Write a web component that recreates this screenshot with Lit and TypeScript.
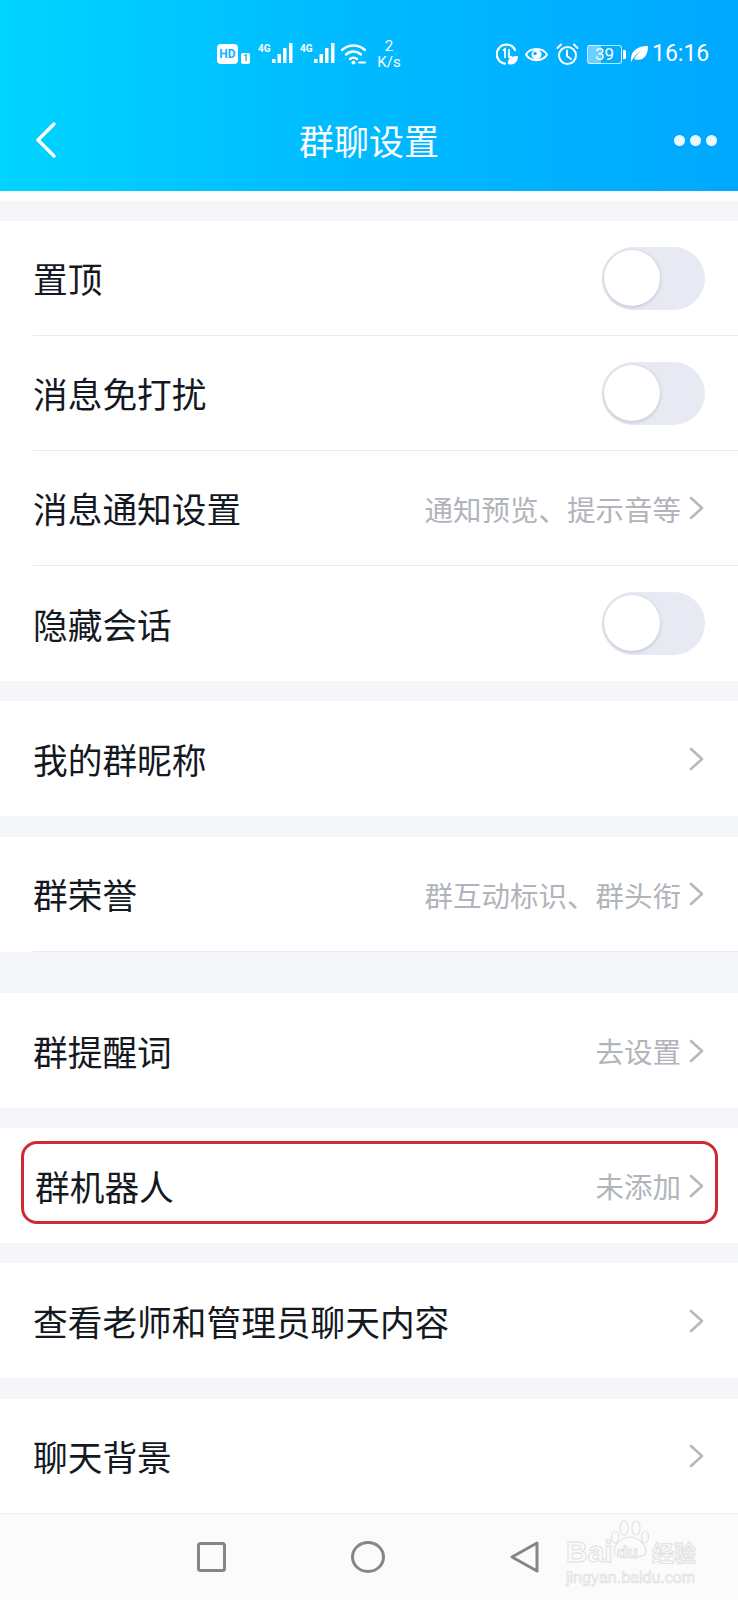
import { LitElement, html, css, svg } from "lit";
import { customElement } from "lit/decorators.js";

const chevron = html`<svg class="chev" viewBox="0 0 15 24"><path d="M2 2l11 10L2 22" fill="none" stroke="currentColor" stroke-width="2.6" stroke-linecap="round" stroke-linejoin="round"/></svg>`;

const signal = html`<svg class="sig" viewBox="0 0 35 22"><text x="0" y="9" font-family="Roboto" font-size="10" font-weight="700" fill="#fff">4G</text>
${svg`<rect x="14" y="16" width="3.500" height="4" fill="#fff"/><rect x="19.500" y="11" width="3.500" height="9" fill="#fff"/><rect x="25" y="5" width="3.500" height="15" fill="#fff"/><rect x="31" y="0" width="3.500" height="20" fill="#fff"/>`}</svg>`;

@customElement("app-root")
export class AppRoot extends LitElement {
  static styles = css`
    :host { display: block; width: 738px; height: 1600px; overflow: hidden; background: #f5f6fa; font-family: "Noto Sans CJK SC", "Noto Sans", sans-serif; }
    .head { height: 191px; background: linear-gradient(90deg, #00d4ff 0%, #00bbff 45%, #00a8ff 100%); color: #fff; display: flex; flex-direction: column; box-sizing: border-box; }
    .status { height: 42px; margin-top: 33px; padding-left: 217px; display: flex; align-items: center; gap: 0; }
    .hd { width: 21px; height: 20px; background: #fff; border-radius: 4px; color: #10b4ff; font: 700 12px/20px Roboto, sans-serif; text-align: center; }
    .one { width: 9px; height: 11px; margin: 8px 0 0 3px; background: #fff; border-radius: 2px; color: #10b4ff; font: 700 9px/11px Roboto, sans-serif; text-align: center; }
    .sig { width: 35px; height: 22px; margin-left: 8px; }
    .sig + .sig { margin-left: 7px; }
    .wifi { width: 27px; height: 22px; margin-left: 5px; }
    .speed { width: 26px; margin-left: 9px; text-align: center; font: 400 15px/16px Roboto, sans-serif; }
    .i { width: 23px; height: 23px; display: block; }
    .i1 { margin-left: 94px; }
    .i2 { margin-left: 6px; }
    .i3 { margin-left: 8px; }
    .batt { width: 35px; height: 19px; margin-left: 8px; box-sizing: border-box; border: 1.5px solid rgba(255,255,255,.75); border-radius: 3px; font: 400 17px/16px Roboto, sans-serif; text-align: center; background: linear-gradient(90deg, rgba(255,255,255,.42) 39%, transparent 39%); }
    .tip { width: 3px; height: 9px; margin-left: 1px; background: #fff; border-radius: 0 1px 1px 0; }
    .leaf { width: 18px; height: 18px; margin-left: 4px; }
    .time { margin-left: 4px; font: 400 23px/28px Roboto, sans-serif; }
    .bar { flex: 1; display: flex; align-items: center; justify-content: space-between; padding: 0 21px 0 35px; margin-top: 14px; position: relative; }
    .back { width: 22px; height: 38px; }
    .title { font-size: 35px; line-height: 42px; position: absolute; left: 0; right: 0; text-align: center; }
    .dots { display: flex; gap: 5px; }
    .dots i { width: 11px; height: 11px; border-radius: 50%; background: #eaf8ff; }
    .stripe { height: 10px; background: #fdfdfe; }
    .list { padding-top: 20px; }
    .sec { background: #fff; margin-bottom: 20px; }
    .sec.g21 { margin-bottom: 21px; }
    .sec.wide { margin-bottom: 41px; }
    .row { margin-left: 33px; padding-right: 34px; height: 115px; box-sizing: border-box; display: flex; align-items: center; border-bottom: 1px solid #e9eaed; position: relative; color: #14181f; font-size: 34.7px; }
    .row.end { border-bottom: none; }
    .row .lab { flex: 1; }
    .row .val { color: #b1b4bb; font-size: 28.5px; margin-right: 8px; }
    .chev { width: 15px; height: 24px; color: #b5b8be; }
    .sw { width: 103px; height: 63px; border-radius: 32px; background: #e8eaf3; margin-right: -1px; position: relative; }
    .sw i { position: absolute; left: 2px; top: 3px; width: 56px; height: 56px; border-radius: 50%; background: #fff; box-shadow: 0 1px 3px 1px rgba(120,125,150,.25); }
    .row.hl { padding-left: 2px; }
    .mark { position: absolute; left: -12px; top: 13px; width: 697px; height: 83px; box-sizing: border-box; border: 3px solid #cc2a36; border-radius: 16px; }
    .nav { height: 87px; margin-top: -21px; background: #fbfbfb; border-top: 1px solid #ececec; box-sizing: border-box; display: flex; align-items: center; padding-left: 197px; gap: 125px; position: relative; }
    .nav svg { display: block; }
    .wm { position: absolute; left: 566px; top: 6px; width: 132px; height: 64px; color: #fff; }
    .wm svg { position: absolute; left: 44px; top: 0; margin: 0; }
    .wm b { position: absolute; font: 700 30px/30px "Liberation Sans", sans-serif; top: 17px; color: #fbfbfb; -webkit-text-stroke: 1px #e0e0e0; }
    .wm .du { left: 51px; top: 24px; font-size: 17px; line-height: 17px; }
    .wm .cn { left: 86px; top: 18px; font: 700 22px/26px "Noto Sans CJK SC", sans-serif; }
    .wm span { position: absolute; left: 0; top: 49px; font: 400 16px/18px "Liberation Sans", sans-serif; color: #fbfbfb; -webkit-text-stroke: .7px #dedede; white-space: nowrap; }
  `;

  private row(label: string, opts: { val?: string; sw?: boolean; end?: boolean; hl?: boolean } = {}) {
    return html`<div class="row ${opts.end ? "end" : ""} ${opts.hl ? "hl" : ""}">
      ${opts.hl ? html`<div class="mark"></div>` : ""}
      <div class="lab">${label}</div>
      ${opts.sw
        ? html`<div class="sw"><i></i></div>`
        : html`${opts.val ? html`<div class="val">${opts.val}</div>` : ""}${chevron}`}
    </div>`;
  }

  render() {
    return html`
      <div class="head">
        <div class="status">
          <div class="hd">HD</div><div class="one">1</div>
          ${signal}${signal}
          <svg class="wifi" viewBox="0 0 27 22" fill="none" stroke="#fff" stroke-width="2.4" stroke-linecap="round"><path d="M2 7c7-6 16-6 23 0M6 11.500c4.500-4 10.500-4 15 0M10 16c2-1.800 5-1.800 7 0"/><circle cx="13.500" cy="19.500" r="2" fill="#fff" stroke="none"/><path d="M19 19.500h6" stroke-width="2"/></svg>
          <div class="speed">2<br />K/s</div>
          <svg class="i i1" viewBox="0 0 23 23"><path d="M19 7A9.600 9.600 0 1 0 9 20.700" fill="none" stroke="#fff" stroke-width="2.2" stroke-linecap="round"/><path d="M7 7.500l2-1.500v9M13 6v8h3" fill="none" stroke="#fff" stroke-width="1.800"/><path d="M12 21c-1-5 3-8 10-8 0 6-4 10-10 8z" fill="#fff"/></svg>
          <svg class="i i2" viewBox="0 0 23 23"><path d="M1 11.500C5 4 18 4 22 11.500 18 19 5 19 1 11.500z" fill="none" stroke="#fff" stroke-width="2"/><circle cx="11.500" cy="11.500" r="5" fill="#fff"/><circle cx="10" cy="10.500" r="1.800" fill="#10b0ff"/></svg>
          <svg class="i i3" viewBox="0 0 23 23" fill="none" stroke="#fff" stroke-width="2" stroke-linecap="round"><circle cx="11.500" cy="12.500" r="8.500"/><path d="M11 7.500v5.500l4 3M1.500 5L5 1.500M21.500 5L18 1.500"/></svg>
          <div class="batt">39</div><div class="tip"></div>
          <svg class="leaf" viewBox="0 0 18 18"><path d="M1 17C0 7 6 1 18 1c0 11-6 16-14 13 2-4 5-7 8-9-4 2-8 6-11 12z" fill="#fff"/></svg>
          <div class="time">16:16</div>
        </div>
        <div class="bar">
          <svg class="back" viewBox="0 0 22 38"><path d="M19 3L3 19l16 16" fill="none" stroke="#fff" stroke-width="3.400" stroke-linecap="round" stroke-linejoin="round"/></svg>
          <div class="title">群聊设置</div>
          <div class="dots"><i></i><i></i><i></i></div>
        </div>
      </div>
      <div class="stripe"></div>
      <div class="list">
        <div class="sec">
          ${this.row("置顶", { sw: true })}
          ${this.row("消息免打扰", { sw: true })}
          ${this.row("消息通知设置", { val: "通知预览、提示音等" })}
          ${this.row("隐藏会话", { sw: true, end: true })}
        </div>
        <div class="sec g21">${this.row("我的群昵称", { end: true })}</div>
        <div class="sec wide">${this.row("群荣誉", { val: "群互动标识、群头衔" })}</div>
        <div class="sec">${this.row("群提醒词", { val: "去设置", end: true })}</div>
        <div class="sec">${this.row("群机器人", { val: "未添加", end: true, hl: true })}</div>
        <div class="sec g21">${this.row("查看老师和管理员聊天内容", { end: true })}</div>
        <div class="sec">${this.row("聊天背景")}</div>
      </div>
      <div class="nav">
        <svg width="29" height="30" viewBox="0 0 29 30"><rect x="1.500" y="1.500" width="26" height="27" rx="2" fill="none" stroke="#868686" stroke-width="3"/></svg>
        <svg width="34" height="32" viewBox="0 0 34 32"><ellipse cx="17" cy="16" rx="15.500" ry="14.500" fill="none" stroke="#868686" stroke-width="3"/></svg>
        <svg width="29" height="32" viewBox="0 0 29 32"><path d="M27 2L2 16l25 14z" fill="none" stroke="#868686" stroke-width="3" stroke-linejoin="round"/></svg>
        <div class="wm">
          <svg width="40" height="38" viewBox="0 0 40 38" fill="none" stroke="#e2e2e2" stroke-width="1.200"><ellipse cx="5" cy="17" rx="3.500" ry="6"/><ellipse cx="14" cy="8" rx="4" ry="7"/><ellipse cx="26" cy="8" rx="4" ry="7"/><ellipse cx="35" cy="17" rx="3.500" ry="6"/><path d="M4 32c0-8 8-15 16-15s16 7 16 15c0 5-10 5-16 5S4 37 4 32z"/></svg>
          <b>Bai</b><b class="du">du</b><b class="cn">经验</b>
          <span>jingyan.baidu.com</span>
        </div>
      </div>
    `;
  }
}
